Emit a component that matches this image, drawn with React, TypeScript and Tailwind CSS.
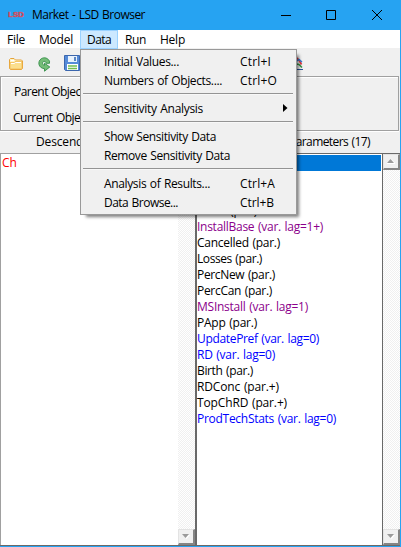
import { useLayoutEffect, useRef } from "react";

/* Single-line label condensed to a fixed advance width. */
function Label({ children, w, className = "" }: { children: string; w: number; className?: string }) {
  const ref = useRef<HTMLSpanElement>(null);
  useLayoutEffect(() => {
    const el = ref.current;
    if (!el) return;
    el.style.letterSpacing = "0px";
    const natural = el.getBoundingClientRect().width;
    el.style.letterSpacing = `${(w - natural) / children.length}px`;
  }, [children, w]);
  return (
    <span ref={ref} className={`inline-block whitespace-pre [word-spacing:0.8px] ${className}`}>
      {children}
    </span>
  );
}

function MenuItem({ text, w, keys, kw = 0, arrow }: { text: string; w: number; keys?: string; kw?: number; arrow?: boolean }) {
  return (
    <div className="flex h-[19px] items-center pl-[23px]">
      <div className="w-[136px]"><Label w={w}>{text}</Label></div>
      {keys && <Label w={kw}>{keys}</Label>}
      {arrow && (
        <svg className="-mt-0.5 ml-[43px]" width="5" height="8" viewBox="0 0 5 8"><path d="M0 0L4.5 4L0 8Z" fill="#000" /></svg>
      )}
    </div>
  );
}

function Separator() {
  return (
    <div className="h-[9px] pt-[3px] pr-[3px] pl-[2px]">
      <div className="h-0.5 border-t border-b border-t-[#949494] border-b-[#f8f8f8]" />
    </div>
  );
}

function ScrollButton({ up }: { up?: boolean }) {
  return (
    <div className="flex h-4 w-[17px] items-center justify-center border border-r-2 border-b-2 border-t-[#e3e3e3] border-l-[#e3e3e3] border-r-[#858585] border-b-[#858585] bg-[#f0f0f0]">
      <svg width="8" height="5" viewBox="0 0 8 5">
        <path d={up ? "M0 4L4 0L8 4V5H0Z" : "M1 1H8L4.5 5Z"} fill="#fff" />
        <path d={up ? "M0 4L3.5 0L7 4Z" : "M0 0H7L3.5 4Z"} fill="#9a9a9a" />
      </svg>
    </div>
  );
}

function ScrollBar() {
  return (
    <div className="flex w-[17px] flex-col justify-between bg-[repeating-conic-gradient(#f0f0f0_0_25%,#ffffff_0_50%)] bg-[length:2px_2px]">
      <ScrollButton up />
      <ScrollButton />
    </div>
  );
}

const rows: [string, number, string][] = [
  ["Users (par.)", 60, "text-black"],
  ["InstallBase (var. lag=1+)", 126, "text-[#8b008b]"],
  ["Cancelled (par.)", 83, "text-black"],
  ["Losses (par.)", 65, "text-black"],
  ["PercNew (par.)", 78, "text-black"],
  ["PercCan (par.)", 75, "text-black"],
  ["MSInstall (var. lag=1)", 111, "text-[#8b008b]"],
  ["PApp (par.)", 60, "text-black"],
  ["UpdatePref (var. lag=0)", 122, "text-[#0000ff]"],
  ["RD (var. lag=0)", 78, "text-[#0000ff]"],
  ["Birth (par.)", 56, "text-black"],
  ["RDConc (par.+)", 82, "text-black"],
  ["TopChRD (par.+)", 90, "text-black"],
  ["ProdTechStats (var. lag=0)", 139, "text-[#0000ff]"],
];

export default function App() {
  return (
    <div className="relative flex h-[547px] w-[401px] flex-col overflow-hidden border-r border-b border-[#26a3f2] bg-[#f0f0f0] font-['Open_Sans','Noto_Sans',sans-serif] text-[12px] leading-4 text-black">
      <header className="flex h-[30px] shrink-0 items-center bg-[#26a3f2] pl-2">
        <svg className="mt-[-3px] mr-2" width="16" height="8" viewBox="0 0 16 8">
          <text x="0" y="7.2" textLength="16" lengthAdjust="spacingAndGlyphs" className="fill-[#d8283a] stroke-[#d06070] font-['Liberation_Sans',sans-serif] text-[8px] font-bold [stroke-width:0.5px]">
            LSD
          </text>
        </svg>
        <Label w={113}>Market - LSD Browser</Label>
        <svg className="ml-auto mr-[17px]" width="102" height="10" viewBox="0 0 102 10" fill="none" stroke="#000">
          <path d="M0 5.5H10M45.5 .5H54.5V9.5H45.5ZM91 0L101 10M101 0L91 10" />
        </svg>
      </header>

      <nav className="flex h-[19px] shrink-0 items-center bg-[linear-gradient(#fff_18px,#f0f0f0_18px)]">
        <div className="w-[39px] pl-[7px]"><Label w={18}>File</Label></div>
        <div className="w-[41px]"><Label w={34}>Model</Label></div>
        <div className="flex h-[19px] w-[38px] items-center border border-[#99d1ff] bg-[#cce8ff] pl-1.5"><Label w={24}>Data</Label></div>
        <div className="w-[42px] pl-[7px]"><Label w={21}>Run</Label></div>
        <Label w={25}>Help</Label>
      </nav>

      <div className="flex h-[27px] shrink-0 items-start pt-1.5 pl-[9px]">
        <svg className="mt-[3px]" width="14" height="12" viewBox="0 0 14 12">
          <path d="M.5 10.5V1.5L1.5 .5H5L6.5 2H12.5L13.5 3V10.5L12.5 11.5H1.5Z" fill="#fff4c6" stroke="#e5a33a" />
          <path d="M1 4.5H5L6 3.5H13V11H1Z" fill="#fbdf8d" stroke="#efb64e" strokeWidth=".7" />
          <path d="M2 2.5H5M2 5.5H5.5L6.5 4.5H12" stroke="#fff" fill="none" />
        </svg>
        <svg className="mt-0.5 ml-[15px]" width="13" height="15" viewBox="0 0 13 15">
          <path d="M11.5 6.3V4.2C9.8 .9 6.3 -.2 3.2 1.8C-.7 4.4 .2 11.2 6.5 11.7V14.2L11.8 10L6.5 6.2V8.3C4.3 8 3.8 5.2 5.7 4.5C7 4.1 8 5 8.2 6.3Z" fill="#75bd78" stroke="#348f48" strokeWidth=".9" />
        </svg>
        <svg className="ml-[13px]" width="17" height="17" viewBox="0 0 17 17">
          <path d="M.5 .5H15.5V15.5H1.5L.5 14.5Z" fill="#558bd8" stroke="#3b66ad" />
          <path d="M4 1H13V7H4Z" fill="#e8f2fd" /><path d="M10 2H12V6H10Z" fill="#5985c3" />
          <path d="M3 9H14V15H3Z" fill="#fff" /><path d="M4 11H13M4 13.5H13" stroke="#72bd50" strokeWidth="1.4" />
        </svg>
        <svg className="ml-[206px] mt-px" width="16" height="15" viewBox="0 0 16 15" fill="none">
          <path d="M9 1.5L12 4L14.5 8.5" stroke="#e33842" strokeWidth="1.8" />
          <path d="M9 5.5L12 3.5L15 6" stroke="#337bd8" strokeWidth="1.5" />
          <path d="M9 8L12 8.5L15 11.5" stroke="#389244" strokeWidth="1.6" />
          <path d="M1 13.5H16" stroke="#28539b" />
        </svg>
      </div>

      <section className="mr-px h-[55px] shrink-0 border border-[#a0a0a0] pt-[7px] pl-[13px] shadow-[inset_1px_1px_#fff,0_1px_#fff]">
        <div className="h-[26px]"><Label w={73}>Parent Object:</Label></div>
        <div className="-ml-px"><Label w={79}>Current Object:</Label></div>
      </section>

      <div className="flex h-[22px] shrink-0 items-center">
        <div className="w-[289px] pl-9"><Label w={88}>Descendants (1)</Label></div>
        <Label w={81}>Parameters (17)</Label>
      </div>

      <main className="flex min-h-0 flex-1 border-b border-[#696969]">
        <section className="flex w-[195px] border-t border-l border-[#a0a0a0] pl-px">
          <div className="flex-1 bg-white pt-px text-[#ff0000] shadow-[-1px_0_#fff]"><Label w={15}>Ch</Label></div>
          <ScrollBar />
        </section>
        <section className="flex flex-1 border-t border-l-2 border-[#696969]">
          <div className="flex-1 border-r border-[#696969] bg-white pt-px pr-px">
            <div className="mb-8 h-4 bg-[#0078d7]" />
            {rows.map(([text, w, color]) => (
              <div key={text} className={`h-4 ${color}`}>
                <Label w={w}>{text}</Label>
              </div>
            ))}
          </div>
          <ScrollBar />
        </section>
      </main>

      <div className="absolute top-[49px] left-20 h-[166px] w-[217px] border border-[#999] bg-[#f0f0f0] pt-0.5 shadow-[4px_4px_3px_-2px_rgba(0,0,0,0.5)]">
        <MenuItem text="Initial Values..." w={75} keys="Ctrl+I" kw={31} />
        <MenuItem text="Numbers of Objects...." w={118} keys="Ctrl+O" kw={37} />
        <Separator />
        <MenuItem text="Sensitivity Analysis" w={99} arrow />
        <Separator />
        <MenuItem text="Show Sensitivity Data" w={112} />
        <MenuItem text="Remove Sensitivity Data" w={126} />
        <Separator />
        <MenuItem text="Analysis of Results..." w={106} keys="Ctrl+A" kw={35} />
        <MenuItem text="Data Browse..." w={74} keys="Ctrl+B" kw={34} />
      </div>
    </div>
  );
}
